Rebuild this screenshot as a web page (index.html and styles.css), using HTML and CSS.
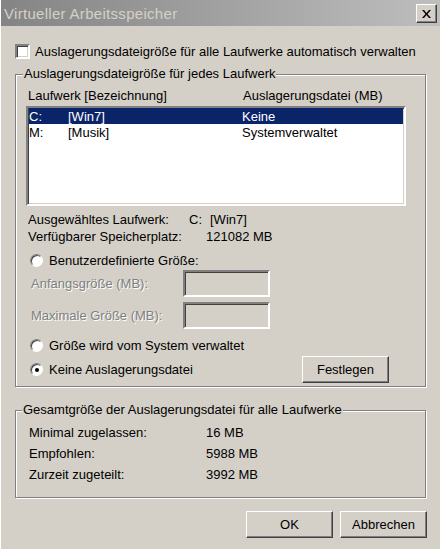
FILE: index.html
```html
<!DOCTYPE html>
<html lang="de">
<head>
  <meta charset="UTF-8">
  <title>Virtueller Arbeitsspeicher</title>
  <link rel="stylesheet" href="styles.css">
</head>
<body>
  <div class="window">
    <div class="titlebar">
      <span class="title">Virtueller Arbeitsspeicher</span>
      <button class="close-button" title="Schließen">
        <svg width="9" height="8" viewBox="0 0 9 8"><path d="M0 0h2l2.5 3 2.5-3h2l-3.5 4 3.5 4h-2l-2.5-3-2.5 3h-2l3.5-4z" fill="#000"/></svg>
      </button>
    </div>

    <div class="content">
      <label class="check-row"><span class="checkbox"></span>Auslagerungsdateigröße für alle Laufwerke automatisch verwalten</label>

      <fieldset class="group group-drives">
        <legend>Auslagerungsdateigröße für jedes Laufwerk</legend>

        <div class="list-header">
          <span class="col-drive-head">Laufwerk [Bezeichnung]</span>
          <span>Auslagerungsdatei (MB)</span>
        </div>
        <div class="listbox">
          <div class="list-row selected"><span class="col-drive">C:</span><span class="col-label">[Win7]</span><span>Keine</span></div>
          <div class="list-row"><span class="col-drive">M:</span><span class="col-label">[Musik]</span><span>Systemverwaltet</span></div>
        </div>

        <div class="info-row first-info"><span class="info-label drive-label">Ausgewähltes Laufwerk:</span><span class="drive-value"><span>C:</span><span>[Win7]</span></span></div>
        <div class="info-row"><span class="info-label space-label">Verfügbarer Speicherplatz:</span><span>121082 MB</span></div>

        <label class="radio-row first-radio"><span class="radio"></span>Benutzerdefinierte Größe:</label>
        <div class="size-row"><span class="disabled-text">Anfangsgröße (MB):</span><span class="textbox"></span></div>
        <div class="size-row second"><span class="disabled-text">Maximale Größe (MB):</span><span class="textbox"></span></div>
        <label class="radio-row system-radio"><span class="radio"></span>Größe wird vom System verwaltet</label>
        <div class="last-row">
          <label class="radio-row"><span class="radio checked"></span>Keine Auslagerungsdatei</label>
          <button class="win-button">Festlegen</button>
        </div>
      </fieldset>

      <fieldset class="group group-total">
        <legend>Gesamtgröße der Auslagerungsdatei für alle Laufwerke</legend>
        <div class="total-grid">
          <span>Minimal zugelassen:</span><span>16 MB</span>
          <span>Empfohlen:</span><span>5988 MB</span>
          <span>Zurzeit zugeteilt:</span><span>3992 MB</span>
        </div>
      </fieldset>

      <div class="dialog-buttons">
        <button class="win-button">OK</button>
        <button class="win-button">Abbrechen</button>
      </div>
    </div>
  </div>
</body>
</html>
```

FILE: styles.css
```css
body {
  margin: 0;
  background: #d4d0c8;
  font-family: "Liberation Sans", Arial, sans-serif;
  font-size: 13px;
  color: #000;
}

.window {
  width: 440px;
  height: 549px;
  border-left: 1px solid #fff;
  box-sizing: border-box;
  overflow: hidden;
}

.titlebar {
  height: 26px;
  display: flex;
  align-items: center;
  justify-content: space-between;
  padding: 0 3px 0 3px;
  background: linear-gradient(to right, #848484, #bebebe);
}

.title {
  font-family: "Liberation Sans", Arial, sans-serif;
  font-size: 15px;
  color: #d4d0c8;
  letter-spacing: 0.3px;
}

.close-button {
  width: 21px;
  height: 19px;
  padding: 0;
  margin-top: 1px;
  display: flex;
  align-items: center;
  justify-content: center;
  background: #d4d0c8;
  border: 1px solid;
  border-color: #fff #404040 #404040 #fff;
  box-shadow: inset -1px -1px #808080;
}

.content {
  padding: 17px 14px 0 14px;
}

.check-row {
  display: flex;
  align-items: center;
  gap: 5px;
  height: 16px;
}

.checkbox {
  width: 11px;
  height: 11px;
  background: #fff;
  border: 2px solid;
  border-color: #808080 #fff #fff #808080;
  box-shadow: inset 1px 1px #404040, inset -1px -1px #d4d0c8;
}

.group {
  margin: 0;
  border: 1px solid #808080;
  box-shadow: inset 1px 1px #fff, 1px 1px #fff;
  padding: 0 10px;
}

.group legend {
  padding: 0 1px;
  margin-left: -3px;
  line-height: 16px;
  background: #d4d0c8;
}

.group-drives {
  margin-top: 7px;
  padding-bottom: 7px;
  height: 321px;
  box-sizing: border-box;
}

.list-header {
  display: flex;
  height: 16px;
  align-items: center;
  margin-top: 5px;
  padding-left: 2px;
}

.col-drive-head {
  width: 215px;
}

.listbox {
  width: 380px;
  height: 100px;
  box-sizing: border-box;
  margin-top: 3px;
  background: #fff;
  border: 2px solid;
  border-color: #808080 #fff #fff #808080;
  box-shadow: inset 1px 1px #404040, inset -1px -1px #d4d0c8;
  padding: 0 1px;
}

.list-row {
  display: flex;
  height: 16px;
  align-items: center;
}

.list-row.selected {
  background: #0a246a;
  color: #fff;
}

.col-drive {
  width: 39px;
}

.col-label {
  width: 174px;
}

.info-row {
  display: flex;
  height: 17px;
  align-items: center;
  padding-left: 2px;
}

.first-info {
  margin-top: 5px;
}

.drive-label {
  width: 161px;
}

.space-label {
  width: 178px;
}

.drive-value {
  display: flex;
  gap: 8px;
}

.radio-row {
  display: flex;
  align-items: center;
  gap: 6px;
  height: 18px;
  padding-left: 4px;
}

.first-radio {
  margin-top: 6px;
}

.system-radio {
  margin-top: 7px;
}

.radio {
  width: 13px;
  height: 13px;
  box-sizing: border-box;
  border-radius: 50%;
  background: #fff;
  border: 1px solid;
  border-color: #808080 #fff #fff #808080;
  box-shadow: inset 1px 1px #404040;
  display: flex;
  align-items: center;
  justify-content: center;
}

.radio.checked::after {
  content: "";
  width: 4px;
  height: 4px;
  border-radius: 50%;
  background: #000;
}

.size-row {
  display: flex;
  align-items: center;
  height: 27px;
  margin-top: 1px;
  padding-left: 5px;
}

.size-row.second {
  margin-top: 5px;
}

.disabled-text {
  width: 152px;
  color: #808080;
  text-shadow: 1px 1px #fff;
}

.textbox {
  width: 87px;
  height: 27px;
  box-sizing: border-box;
  border: 2px solid;
  border-color: #808080 #fff #fff #808080;
  box-shadow: inset 1px 1px #404040, inset -1px -1px #d4d0c8;
}

.last-row {
  display: flex;
  align-items: center;
  justify-content: space-between;
  height: 27px;
  margin-top: 2px;
  width: 363px;
}

.win-button {
  width: 87px;
  height: 27px;
  padding: 0;
  font-family: "Liberation Sans", Arial, sans-serif;
  font-size: 13px;
  color: #000;
  background: #d4d0c8;
  border: 1px solid;
  border-color: #fff #404040 #404040 #fff;
  box-shadow: inset -1px -1px #808080;
}

.group-total {
  margin-top: 15px;
  height: 96px;
  box-sizing: border-box;
}

.group-total legend {
  margin-left: -4px;
}

.total-grid {
  display: grid;
  grid-template-columns: 177px auto;
  grid-auto-rows: 21px;
  align-items: center;
  margin-top: 4px;
  padding-left: 3px;
}

.dialog-buttons {
  display: flex;
  justify-content: flex-end;
  gap: 7px;
  margin-top: 13px;
  margin-right: -1px;
}
```
